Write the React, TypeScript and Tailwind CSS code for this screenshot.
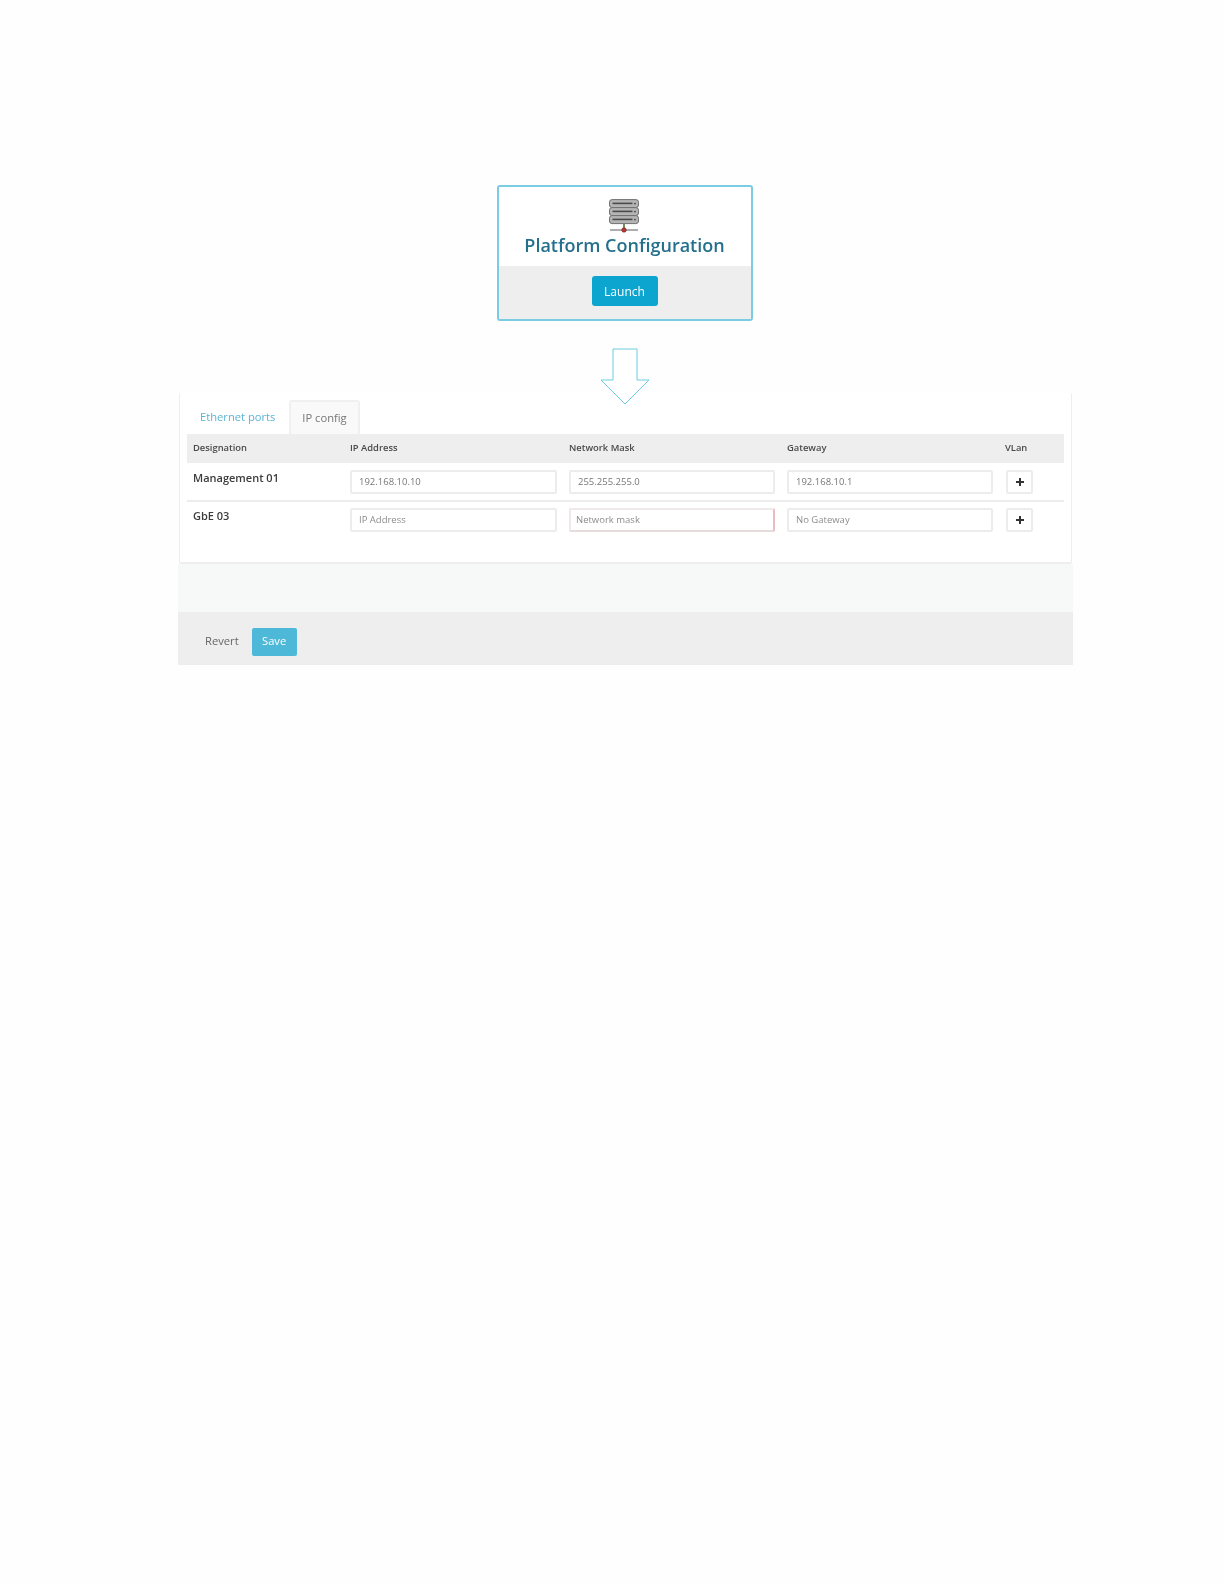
import React from "react";

const font = { fontFamily: '"Open Sans", sans-serif' };

function ServerIcon() {
  return (
    <svg width="32" height="35" viewBox="0 0 32 35" className="block">
      {[0.6, 8.6, 16.6].map((y) => (
        <g key={y}>
          <rect x="1.5" y={y} width="29" height="8" rx="2.6" fill="#b4b4b4" stroke="#707070" strokeWidth="1" />
          <rect x="4.5" y={y + 3} width="20" height="1.6" fill="#4a4a4a" />
          <circle cx="27" cy={y + 4} r="0.9" fill="#444" />
        </g>
      ))}
      <path d="M16 25 V31" stroke="#5b6b3a" strokeWidth="1.6" />
      <path d="M2 31 H30" stroke="#5f5f5f" strokeWidth="1.2" />
      <circle cx="16" cy="31" r="2.3" fill="#b5352f" stroke="#6a2320" strokeWidth="0.5" />
    </svg>
  );
}

function ArrowDown() {
  return (
    <svg width="50" height="57" viewBox="0 0 50 57" className="block">
      <path d="M13 1 H37 V32 H49 L25 56 L1 32 H13 Z" fill="#fff" stroke="#6ccde0" strokeWidth="1" />
    </svg>
  );
}

function Field({ text, placeholder, invalid }: { text: string; placeholder?: boolean; invalid?: boolean }) {
  return (
    <div
      className={`h-[24px] flex items-center rounded-[2px] border-2 bg-white text-[9.5px] ${
        invalid
          ? "border-[#efe9e9] border-r-[#eeb9c0] border-b-[#e6dcdc] pl-[5px]"
          : "border-[#ececec] pl-[7px]"
      } ${placeholder ? "text-[#8c8c8c]" : "text-[#777]"}`}
    >
      {text}
    </div>
  );
}

function PlusButton() {
  return (
    <div className="ml-[1px] w-[27px] h-[24px] flex items-center justify-center rounded-[2px] border-2 border-[#ececec] bg-white">
      <svg width="10" height="10" viewBox="0 0 10 10">
        <path d="M5 1 V9 M1 5 H9" stroke="#333" strokeWidth="2" />
      </svg>
    </div>
  );
}

const gridCols = "grid grid-cols-[145px_207px_206px_206px_1fr] gap-x-[12px]";

function Row({
  name,
  values,
  border,
}: {
  name: string;
  values: { text: string; placeholder?: boolean; invalid?: boolean }[];
  border?: boolean;
}) {
  return (
    <div className={`${gridCols} pl-[6px] ${border ? "border-b-2 border-[#ececec] pt-[7px] pb-[6px]" : "pt-[6px]"}`}>
      <div className="text-[11px] font-semibold text-[#3c3c3c] leading-[16px] whitespace-nowrap">{name}</div>
      {values.map((v, i) => (
        <Field key={i} {...v} />
      ))}
      <PlusButton />
    </div>
  );
}

export default function App() {
  return (
    <div style={font} className="w-[1224px] h-[1584px] bg-[#fefefe] flex flex-col items-center pt-[185px] pl-[25px] blur-[0.5px]">
      <div className="w-[256px] h-[136px] rounded-[3px] border-2 border-[#7accE2] bg-white flex flex-col overflow-hidden">
        <div className="h-[79px] flex flex-col items-center pt-[12px]">
          <div className="mr-[2px]">
            <ServerIcon />
          </div>
          <div className="text-[18px] font-semibold leading-[24px] mt-[-1px] text-[#25708c] whitespace-nowrap">
            Platform Configuration
          </div>
        </div>
        <div className="flex-1 bg-[#eeeeee] flex justify-center pt-[10px]">
          <div className="w-[66px] h-[30px] pt-[1px] rounded-[3px] bg-[#0ba5d0] text-white text-[12px] font-medium flex items-center justify-center">
            Launch
          </div>
        </div>
      </div>

      <div className="relative z-10 mt-[27px] mb-[-12px]">
        <ArrowDown />
      </div>

      <div className="w-[895px] ml-[2px] flex flex-col">
        <div className="h-[171px] mx-[1px] bg-white rounded-[2px] border-x border-b-2 border-[#eeeeee] pl-[7px] pr-[7px] pt-[7px]">
          <div className="flex h-[34px] items-stretch">
            <div className="w-[102px] pl-[13px] flex items-center text-[11.2px] text-[#5ab4d6]">Ethernet ports</div>
            <div className="w-[71px] flex items-center justify-center text-[11.2px] text-[#777] bg-[#f9f9f9] border-x-2 border-t-2 border-[#f0f0f0] rounded-t-[3px]">
              IP config
            </div>
          </div>
          <div className={`${gridCols} pl-[6px] h-[29px] items-center bg-[#eeeeee] text-[9.4px] font-semibold text-[#4a4a4a]`}>
            <div>Designation</div>
            <div>IP Address</div>
            <div>Network Mask</div>
            <div>Gateway</div>
            <div>VLan</div>
          </div>
          <Row
            name="Management 01"
            border
            values={[{ text: "192.168.10.10" }, { text: "255.255.255.0" }, { text: "192.168.10.1" }]}
          />
          <Row
            name="GbE 03"
            values={[
              { text: "IP Address", placeholder: true },
              { text: "Network mask", placeholder: true, invalid: true },
              { text: "No Gateway", placeholder: true },
            ]}
          />
        </div>
        <div className="h-[48px] bg-[#f7f8f8]" />
        <div className="h-[53px] bg-[#eeeeee] flex items-center pl-[27px] pt-[6px] gap-[13px]">
          <span className="text-[11.2px] text-[#666]">Revert</span>
          <div className="w-[45px] h-[28px] rounded-[2px] bg-[#4db8d8] text-white text-[11.2px] font-medium flex items-center justify-center">
            Save
          </div>
        </div>
      </div>
    </div>
  );
}
